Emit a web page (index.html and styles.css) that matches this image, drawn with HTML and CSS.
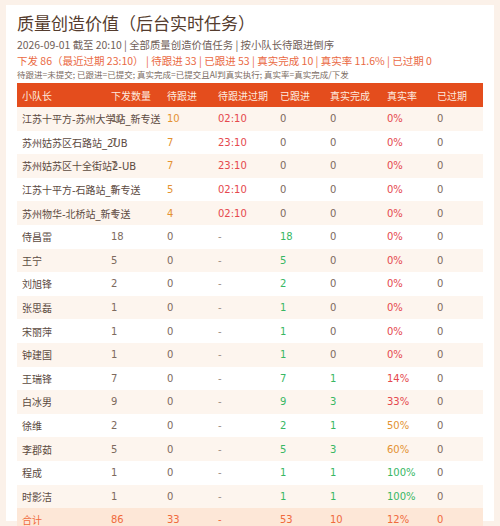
FILE: index.html
```html
<!DOCTYPE html>
<html lang="zh-CN">
<head>
    <meta charset="UTF-8">
    <meta name="viewport" content="width=device-width, initial-scale=1.0">
    <title>质量创造价值（后台实时任务）</title>
    <link rel="stylesheet" href="styles.css">
</head>
<body>
    <div class="card">
        <h1 class="title">质量创造价值（后台实时任务）</h1>
        <div class="meta">2026-09-01 截至 20:10 | 全部质量创造价值任务 | 按小队长待跟进倒序</div>
        <div class="summary">下发 86（最近过期 23:10） | 待跟进 33 | 已跟进 53 | 真实完成 10 | 真实率 11.6% | 已过期 0</div>
        <div class="note">待跟进=未提交; 已跟进=已提交; 真实完成=已提交且AI判真实执行; 真实率=真实完成/下发</div>

        <table class="grid">
            <colgroup>
                <col style="width:89px">
                <col style="width:56px">
                <col style="width:51px">
                <col style="width:62px">
                <col style="width:50px">
                <col style="width:57px">
                <col style="width:50px">
                <col style="width:51px">
            </colgroup>
            <thead>
                <tr>
                    <th>小队长</th>
                    <th>下发数量</th>
                    <th>待跟进</th>
                    <th>待跟进过期</th>
                    <th>已跟进</th>
                    <th>真实完成</th>
                    <th>真实率</th>
                    <th>已过期</th>
                </tr>
            </thead>
            <tbody>
                <tr>
                    <td class="name">江苏十平方-苏州大学站_新专送</td>
                    <td>10</td><td class="warn">10</td><td class="bad">02:10</td>
                    <td>0</td><td>0</td><td class="bad">0%</td><td>0</td>
                </tr>
                <tr>
                    <td class="name">苏州姑苏区石路站_2UB</td>
                    <td>7</td><td class="warn">7</td><td class="bad">23:10</td>
                    <td>0</td><td>0</td><td class="bad">0%</td><td>0</td>
                </tr>
                <tr>
                    <td class="name">苏州姑苏区十全街站2-UB</td>
                    <td>7</td><td class="warn">7</td><td class="bad">23:10</td>
                    <td>0</td><td>0</td><td class="bad">0%</td><td>0</td>
                </tr>
                <tr>
                    <td class="name">江苏十平方-石路站_新专送</td>
                    <td>5</td><td class="warn">5</td><td class="bad">02:10</td>
                    <td>0</td><td>0</td><td class="bad">0%</td><td>0</td>
                </tr>
                <tr>
                    <td class="name">苏州物华-北桥站_新专送</td>
                    <td>4</td><td class="warn">4</td><td class="bad">02:10</td>
                    <td>0</td><td>0</td><td class="bad">0%</td><td>0</td>
                </tr>
                <tr>
                    <td class="name">侍昌雷</td>
                    <td>18</td><td>0</td><td class="dash">-</td>
                    <td class="good">18</td><td>0</td><td class="bad">0%</td><td>0</td>
                </tr>
                <tr>
                    <td class="name">王宁</td>
                    <td>5</td><td>0</td><td class="dash">-</td>
                    <td class="good">5</td><td>0</td><td class="bad">0%</td><td>0</td>
                </tr>
                <tr>
                    <td class="name">刘旭锋</td>
                    <td>2</td><td>0</td><td class="dash">-</td>
                    <td class="good">2</td><td>0</td><td class="bad">0%</td><td>0</td>
                </tr>
                <tr>
                    <td class="name">张思磊</td>
                    <td>1</td><td>0</td><td class="dash">-</td>
                    <td class="good">1</td><td>0</td><td class="bad">0%</td><td>0</td>
                </tr>
                <tr>
                    <td class="name">宋丽萍</td>
                    <td>1</td><td>0</td><td class="dash">-</td>
                    <td class="good">1</td><td>0</td><td class="bad">0%</td><td>0</td>
                </tr>
                <tr>
                    <td class="name">钟建国</td>
                    <td>1</td><td>0</td><td class="dash">-</td>
                    <td class="good">1</td><td>0</td><td class="bad">0%</td><td>0</td>
                </tr>
                <tr>
                    <td class="name">王瑞锋</td>
                    <td>7</td><td>0</td><td class="dash">-</td>
                    <td class="good">7</td><td class="good">1</td><td class="bad">14%</td><td>0</td>
                </tr>
                <tr>
                    <td class="name">白冰男</td>
                    <td>9</td><td>0</td><td class="dash">-</td>
                    <td class="good">9</td><td class="good">3</td><td class="bad">33%</td><td>0</td>
                </tr>
                <tr>
                    <td class="name">徐维</td>
                    <td>2</td><td>0</td><td class="dash">-</td>
                    <td class="good">2</td><td class="good">1</td><td class="warn">50%</td><td>0</td>
                </tr>
                <tr>
                    <td class="name">李郡茹</td>
                    <td>5</td><td>0</td><td class="dash">-</td>
                    <td class="good">5</td><td class="good">3</td><td class="warn">60%</td><td>0</td>
                </tr>
                <tr>
                    <td class="name">程成</td>
                    <td>1</td><td>0</td><td class="dash">-</td>
                    <td class="good">1</td><td class="good">1</td><td class="good">100%</td><td>0</td>
                </tr>
                <tr>
                    <td class="name">时影洁</td>
                    <td>1</td><td>0</td><td class="dash">-</td>
                    <td class="good">1</td><td class="good">1</td><td class="good">100%</td><td>0</td>
                </tr>
                <tr class="total">
                    <td class="name">合计</td>
                    <td>86</td><td>33</td><td>-</td>
                    <td>53</td><td>10</td><td>12%</td><td>0</td>
                </tr>
            </tbody>
        </table>
    </div>
</body>
</html>
```

FILE: styles.css
```css
body {
    margin: 0;
    padding: 5px 6px;
    background: #fbf1e9;
    font-family: "Noto Sans CJK SC", sans-serif;
    color: #5c4a3f;
}

.card {
    height: 516px;
    box-sizing: border-box;
    padding: 6px 11px 0;
    background: #fff;
}

.title {
    margin: 0;
    font-size: 17px;
    line-height: 24px;
    font-weight: normal;
    color: #553c2e;
}

.meta {
    margin-top: 2px;
    font-size: 10.4px;
    line-height: 16px;
    color: #6f6058;
}

.summary {
    font-size: 10.5px;
    line-height: 15px;
    color: #ea6a44;
}

.note {
    font-size: 8.5px;
    line-height: 12px;
    color: #7b6c63;
}

.grid {
    margin-top: 3px;
    width: 466px;
    table-layout: fixed;
    border-collapse: collapse;
    font-family: "DejaVu Sans", "Noto Sans CJK SC", sans-serif;
    font-size: 10px;
}

.grid th {
    height: 24px;
    padding: 0 5px;
    background: #e44d1d;
    color: #fde9df;
    font-weight: normal;
    text-align: left;
    white-space: nowrap;
}

.grid td {
    height: 23.6px;
    padding: 0 5px;
    text-align: left;
    color: #7d6a5e;
}

.grid td.name {
    white-space: nowrap;
    color: #5c4a3f;
}

.grid tbody tr:nth-child(odd) {
    background: #fdf5ee;
}

.grid td.warn {
    color: #e49231;
}

.grid td.bad {
    color: #e5484d;
}

.grid td.good {
    color: #38b764;
}

.grid td.dash {
    color: #9c8d84;
}

.grid tr.total {
    background: #fde7d7;
}

.grid tr.total td {
    color: #f06a3c;
}
```
